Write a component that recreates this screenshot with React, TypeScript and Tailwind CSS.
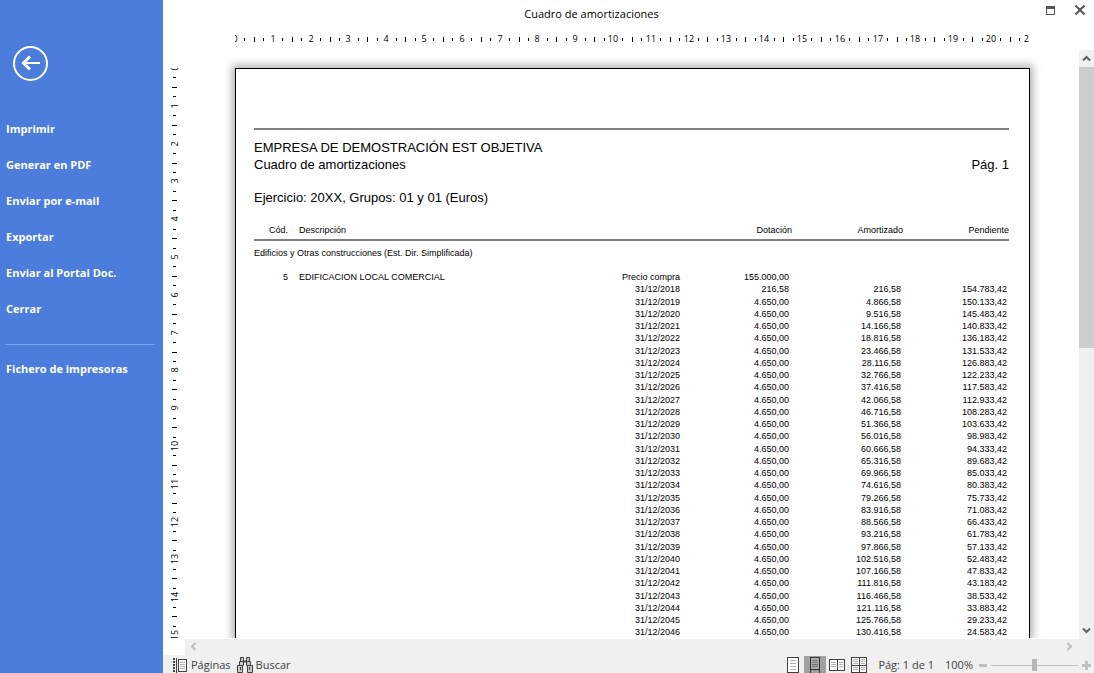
const CM = 37.8;

const menuItems = ["Imprimir", "Generar en PDF", "Enviar por e-mail", "Exportar", "Enviar al Portal Doc.", "Cerrar"];

const START = 154783.42;
const TOTAL = 155000;

const formatAmount = (value: number) => {
  const [int, dec] = value.toFixed(2).split(".");
  return `${int.replace(/\B(?=(\d{3})+$)/g, ".")},${dec}`;
};

const rows = Array.from({ length: 29 }, (_, i) => {
  const pending = START - 4650 * i;
  return {
    date: `31/12/${2018 + i}`,
    amount: formatAmount(i === 0 ? TOTAL - START : 4650),
    amortized: formatAmount(TOTAL - pending),
    pending: formatAmount(pending),
  };
});

const HorizontalRuler = () => (
  <svg className="block h-3 w-full" fontFamily='"Open Sans", sans-serif' fontSize="9" textAnchor="middle">
    {Array.from({ length: 85 }, (_, i) => {
      const x = Math.round((i * CM) / 4);
      if (i % 4 === 0) {
        return <text key={i} x={x} y="9">{i / 4}</text>;
      }
      return i % 2 === 0
        ? <rect key={i} x={x} y="4" width="1" height="5" />
        : <rect key={i} x={x} y="5" width="1" height="3" />;
    })}
  </svg>
);

const VerticalRuler = () => (
  <svg className="block h-full w-3" fontFamily='"Open Sans", sans-serif' fontSize="9" textAnchor="middle">
    {Array.from({ length: 61 }, (_, i) => {
      const y = Math.round((i * CM) / 4);
      if (i % 4 === 0) {
        return <text key={i} transform={`translate(9 ${y}) rotate(-90)`}>{i / 4}</text>;
      }
      return i % 2 === 0
        ? <rect key={i} x="3" y={y} width="5" height="1" />
        : <rect key={i} x="4" y={y} width="3" height="1" />;
    })}
  </svg>
);

const Chevron = ({ d }: { d: string }) => (
  <svg viewBox="0 0 9 9" className="size-[9px]" fill="none" stroke="currentColor" strokeWidth="2">
    <path d={d} />
  </svg>
);

const Sidebar = () => (
  <nav className="flex w-[163px] shrink-0 flex-col bg-[#4c7cdc] font-['Open_Sans',sans-serif] text-[11px] font-bold text-white">
    <button aria-label="Volver" className="mt-[46px] ml-3 size-9">
      <svg viewBox="0 0 36 36" className="size-9" fill="none" stroke="currentColor" strokeWidth="2">
        <circle cx="18.5" cy="17.5" r="16.5" />
        <path d="M11 17h17" />
        <path d="M18 10.500l-6.500 6.500 6.500 6.500" strokeWidth="3" />
      </svg>
    </button>
    <ul className="mt-[29px]">
      {menuItems.map((item) => (
        <li key={item}>
          <button className="flex h-9 w-full items-center pl-[6px]">{item}</button>
        </li>
      ))}
    </ul>
    <hr className="mt-[17px] mr-2 ml-[5px] border-[#7fa1e6]" />
    <button className="mt-[6px] flex h-9 items-center pl-[6px]">Fichero de impresoras</button>
  </nav>
);

const TitleBar = () => (
  <header className="flex h-7 shrink-0 items-center">
    <h1 className="flex-1 pr-[26px] text-center font-['Open_Sans',sans-serif] text-[11px]">Cuadro de amortizaciones</h1>
    <div className="flex items-center gap-[19px] pr-[9px] pb-2 text-[#555]">
      <button aria-label="Maximizar">
        <svg viewBox="0 0 10 10" className="size-[10px]" fill="currentColor">
          <path fillRule="evenodd" d="M0 1h9v9H0zM1 4v5h7V4z" />
        </svg>
      </button>
      <button aria-label="Cerrar vista">
        <svg viewBox="0 0 10 10" className="size-[10px]" stroke="currentColor" strokeWidth="2">
          <path d="M.5.5l9 9M9.500.5l-9 9" />
        </svg>
      </button>
    </div>
  </header>
);

const Report = () => (
  <article className="mr-[49px] min-w-0 flex-1 overflow-hidden border border-b-0 border-black bg-white pr-5 pl-[18px] shadow-[0_0_8px_3px_rgba(0,0,0,0.3)]">
    <div className="mt-[59px] border-t-2 border-[#808080] pt-[9px] font-['Liberation_Sans',sans-serif] text-[13px] leading-[17px]">
      <h2>EMPRESA DE DEMOSTRACIÓN EST OBJETIVA</h2>
      <div className="flex justify-between">
        <p>Cuadro de amortizaciones</p>
        <p>Pág. 1</p>
      </div>
      <p className="mt-4">Ejercicio: 20XX, Grupos: 01 y 01 (Euros)</p>
    </div>
    <table className="mt-[18px] w-full table-fixed text-right font-['Liberation_Sans',sans-serif] text-[9px] leading-3 whitespace-nowrap">
      <colgroup>
        <col className="w-[34px]" />
        <col />
        <col className="w-[100px]" />
        <col className="w-[112px]" />
        <col className="w-[111px]" />
        <col className="w-[106px]" />
      </colgroup>
      <thead>
        <tr className="h-4 border-b-2 border-[#808080] align-top">
          <th className="font-normal">Cód.</th>
          <th className="pl-[11px] text-left font-normal">Descripción</th>
          <th aria-label="Fecha" />
          <th className="font-normal">Dotación</th>
          <th className="font-normal">Amortizado</th>
          <th className="font-normal">Pendiente</th>
        </tr>
      </thead>
      <tbody className="align-top">
        <tr className="h-[31px]">
          <td colSpan={6} className="pt-[6px] text-left">Edificios y Otras construcciones (Est. Dir. Simplificada)</td>
        </tr>
        <tr className="h-3">
          <td>5</td>
          <td className="pl-[11px] text-left">EDIFICACION LOCAL COMERCIAL</td>
          <td>Precio compra</td>
          <td className="pr-[3px]">155.000,00</td>
          <td />
          <td />
        </tr>
        {rows.map((row) => (
          <tr key={row.date} className="h-3 nth-[4n+3]:h-[13px]">
            <td />
            <td />
            <td>{row.date}</td>
            <td className="pr-[3px]">{row.amount}</td>
            <td className="pr-[2px]">{row.amortized}</td>
            <td className="pr-[2px]">{row.pending}</td>
          </tr>
        ))}
      </tbody>
    </table>
  </article>
);

const VerticalScrollbar = () => (
  <div className="flex w-[15px] shrink-0 flex-col items-center bg-[#f0f0f0] text-[#606060]">
    <button aria-label="Desplazar arriba" className="flex h-[17px] shrink-0 items-center">
      <Chevron d="M1 6.500l3.500-3.500 3.500 3.500" />
    </button>
    <div className="h-[281px] w-full bg-[#cdcdcd]" />
    <button aria-label="Desplazar abajo" className="mt-auto flex h-[17px] shrink-0 items-center">
      <Chevron d="M1 2.500l3.500 3.500 3.500-3.500" />
    </button>
  </div>
);

const HorizontalScrollbar = () => (
  <div className="ml-[22px] flex h-4 shrink-0 items-center justify-between bg-[#f0f0f0] pr-5 pb-[2px] pl-1 text-[#bfbfbf]">
    <button aria-label="Desplazar a la izquierda">
      <Chevron d="M6.500 1l-3.500 3.500 3.500 3.500" />
    </button>
    <button aria-label="Desplazar a la derecha">
      <Chevron d="M2.500 1l3.500 3.500-3.500 3.500" />
    </button>
  </div>
);

const PagesIcon = () => (
  <svg viewBox="0 0 15 15" className="size-[15px]" fill="none" shapeRendering="crispEdges">
    <path d="M1 0v15" stroke="#404040" strokeWidth="2" strokeDasharray="2 1" />
    <path d="M3.500 0v15" stroke="#404040" />
    <rect x="5.500" y="1.500" width="8" height="12" fill="#fff" stroke="#404040" />
    <path d="M7 4.500h5M7 6.500h5M7 8.500h5M7 10.500h5" stroke="#b0b0b0" />
  </svg>
);

const BinocularsIcon = () => (
  <svg viewBox="0 0 16 16" className="size-4" fill="#c8c8c8" stroke="#404040">
    <path d="M6 4.500h4" strokeWidth="2" />
    <path d="M3.500.5h3v4h-3zM9.500.5h3v4h-3z" />
    <path d="M2.500 4.500h4v4h-4zM9.500 4.500h4v4h-4z" />
    <path d="M.5 8.500h5v7h-5zM10.500 8.500h5v7h-5zM3.500 10v3M12.500 10v3" />
  </svg>
);

const StatusBar = () => (
  <footer className="flex h-[18px] shrink-0 items-center bg-[#f0f0f0] pt-[2px] pr-[3px] pl-[10px] font-['Open_Sans',sans-serif] text-[11px] text-[#404040]">
    <button className="flex items-center gap-[3px]"><PagesIcon />Páginas</button>
    <button className="ml-[6px] flex items-center gap-[3px]"><BinocularsIcon />Buscar</button>
    <div className="ml-auto flex h-full items-center">
      <button aria-label="Página completa" className="flex h-[18px] w-[22px] items-center justify-center">
        <svg viewBox="0 0 12 16" className="h-4 w-3" fill="#fff" stroke="#404040" shapeRendering="crispEdges">
          <rect x=".5" y=".5" width="11" height="15" />
          <path d="M3 3.500h6M3 6.500h6M3 9.500h6M3 12.500h6" stroke="#b0b0b0" />
        </svg>
      </button>
      <button aria-label="Ancho de página" className="flex h-[18px] w-[22px] items-center justify-center bg-[#a0a0a0]">
        <svg viewBox="0 0 10 16" className="h-4 w-[10px]" fill="#b0b0b0" stroke="#303030" shapeRendering="crispEdges">
          <rect x=".5" y=".5" width="9" height="12" />
          <path d="M2 3.500h6M2 5.500h6M2 7.500h6M2 9.500h6" stroke="#707070" />
          <path d="M.5 13v3M9.500 13v3" />
        </svg>
      </button>
      <button aria-label="Dos páginas" className="flex h-[18px] w-[22px] items-center justify-center">
        <svg viewBox="0 0 16 12" className="h-3 w-4" fill="#fff" stroke="#404040" shapeRendering="crispEdges">
          <path d="M.5.5h15v11H.5zM8.500.5v11" />
          <path d="M2 3.500h5M2 5.500h5M2 7.500h5M10 3.500h4M10 5.500h4M10 7.500h4" stroke="#b0b0b0" />
        </svg>
      </button>
      <button aria-label="Varias páginas" className="flex h-[18px] w-[22px] items-center justify-center">
        <svg viewBox="0 0 16 16" className="size-4" fill="#fff" stroke="#404040" shapeRendering="crispEdges">
          <path d="M.5.5h15v15H.5zM8.500.5v15M.5 8.500h15" />
          <path d="M2 2.500h5M2 4.500h5M2 6.500h5M10 2.500h4M10 4.500h4M10 6.500h4M2 10.500h5M2 12.500h5M10 10.500h4M10 12.500h4" stroke="#b0b0b0" />
        </svg>
      </button>
      <span className="ml-2">Pág: 1 de 1</span>
      <span className="ml-[11px]">100%</span>
      <button aria-label="Reducir" className="ml-[6px] h-[3px] w-2 bg-[#c0c0c0]" />
      <input
        type="range"
        aria-label="Zoom"
        className="mx-1 h-3 w-[87px] appearance-none bg-[linear-gradient(#c0c0c0,#c0c0c0)] bg-size-[100%_1px] bg-center bg-no-repeat [&::-webkit-slider-thumb]:h-3 [&::-webkit-slider-thumb]:w-[5px] [&::-webkit-slider-thumb]:appearance-none [&::-webkit-slider-thumb]:bg-[#b8b8b8]"
      />
      <button aria-label="Ampliar" className="text-[#c0c0c0]">
        <svg viewBox="0 0 9 9" className="size-[9px]" stroke="currentColor" strokeWidth="3">
          <path d="M4.500 0v9M0 4.500h9" />
        </svg>
      </button>
    </div>
  </footer>
);

export default function App() {
  return (
    <div className="flex h-screen overflow-hidden bg-white text-black">
      <Sidebar />
      <main className="flex min-w-0 flex-1 flex-col">
        <TitleBar />
        <div className="flex min-h-0 flex-1">
          <div className="flex min-w-0 flex-1 flex-col overflow-hidden">
            <div className="mt-[5px] mr-[50px] ml-[72px]">
              <HorizontalRuler />
            </div>
            <div className="mt-[7px] mb-px flex min-h-0 flex-1 overflow-hidden pt-4">
              <div className="mr-[54px] ml-[6px] h-full">
                <VerticalRuler />
              </div>
              <Report />
            </div>
          </div>
          <div className="flex pt-[22px]">
            <VerticalScrollbar />
          </div>
        </div>
        <HorizontalScrollbar />
        <StatusBar />
      </main>
    </div>
  );
}
